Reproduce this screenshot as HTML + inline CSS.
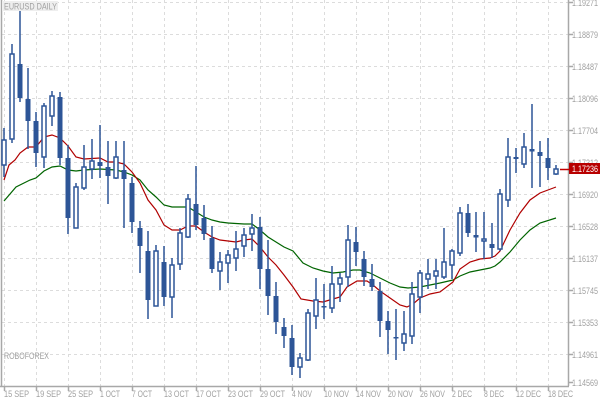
<!DOCTYPE html>
<html><head><meta charset="utf-8"><style>
html,body{margin:0;padding:0;background:#fff;}
svg{display:block;}
text{font-family:"Liberation Sans",sans-serif;font-size:9px;fill:#a0a0a0;}
</style></head><body>
<svg width="600" height="400" viewBox="0 0 600 400" xmlns="http://www.w3.org/2000/svg">
<rect width="600" height="400" fill="#fff"/>
<g stroke="#dcdcdc" stroke-width="1" stroke-dasharray="3,3">
<path d="M2 2.5H568M2 34.5H568M2 66.5H568M2 98.5H568M2 130.5H568M2 162.5H568M2 194.5H568M2 226.5H568M2 258.5H568M2 290.5H568M2 322.5H568M2 354.5H568"/>
<path d="M4.5 0V386M36.5 0V386M68.5 0V386M100.5 0V386M132.5 0V386M164.5 0V386M196.5 0V386M228.5 0V386M260.5 0V386M292.5 0V386M324.5 0V386M356.5 0V386M388.5 0V386M420.5 0V386M452.5 0V386M484.5 0V386M516.5 0V386M548.5 0V386"/>
</g>
<g stroke="#a8a8a8" stroke-width="1.5" fill="none">
<path d="M1.5 0V386M568.5 0V386M0 386.5H569"/>
<path d="M4.5 386V391M36.5 386V391M68.5 386V391M100.5 386V391M132.5 386V391M164.5 386V391M196.5 386V391M228.5 386V391M260.5 386V391M292.5 386V391M324.5 386V391M356.5 386V391M388.5 386V391M420.5 386V391M452.5 386V391M484.5 386V391M516.5 386V391M548.5 386V391"/>
<path d="M568 2.5H573M568 34.5H573M568 66.5H573M568 98.5H573M568 130.5H573M568 162.5H573M568 194.5H573M568 226.5H573M568 258.5H573M568 290.5H573M568 322.5H573M568 354.5H573M568 382.5H573"/>
</g>
<rect x="2" y="1" width="56" height="10" fill="#eee"/>
<text x="4" y="9.5" textLength="53" lengthAdjust="spacingAndGlyphs">EURUSD DAILY</text>
<text x="4" y="359" textLength="45" lengthAdjust="spacingAndGlyphs">ROBOFOREX</text>
<g>
<text x="572" y="6" textLength="26" lengthAdjust="spacingAndGlyphs">1.19271</text><text x="572" y="38" textLength="26" lengthAdjust="spacingAndGlyphs">1.18879</text><text x="572" y="70" textLength="26" lengthAdjust="spacingAndGlyphs">1.18487</text><text x="572" y="102" textLength="26" lengthAdjust="spacingAndGlyphs">1.18096</text><text x="572" y="134" textLength="26" lengthAdjust="spacingAndGlyphs">1.17704</text><text x="572" y="166" textLength="26" lengthAdjust="spacingAndGlyphs">1.17312</text><text x="572" y="198" textLength="26" lengthAdjust="spacingAndGlyphs">1.16920</text><text x="572" y="230" textLength="26" lengthAdjust="spacingAndGlyphs">1.16528</text><text x="572" y="262" textLength="26" lengthAdjust="spacingAndGlyphs">1.16137</text><text x="572" y="294" textLength="26" lengthAdjust="spacingAndGlyphs">1.15745</text><text x="572" y="326" textLength="26" lengthAdjust="spacingAndGlyphs">1.15353</text><text x="572" y="358" textLength="26" lengthAdjust="spacingAndGlyphs">1.14961</text><text x="572" y="386" textLength="26" lengthAdjust="spacingAndGlyphs">1.14569</text>
</g>
<g>
<text x="4" y="397" textLength="25" lengthAdjust="spacingAndGlyphs">15 SEP</text><text x="36" y="397" textLength="25" lengthAdjust="spacingAndGlyphs">19 SEP</text><text x="68" y="397" textLength="25" lengthAdjust="spacingAndGlyphs">25 SEP</text><text x="100" y="397" textLength="20" lengthAdjust="spacingAndGlyphs">1 OCT</text><text x="132" y="397" textLength="20" lengthAdjust="spacingAndGlyphs">7 OCT</text><text x="164" y="397" textLength="25" lengthAdjust="spacingAndGlyphs">13 OCT</text><text x="196" y="397" textLength="25" lengthAdjust="spacingAndGlyphs">17 OCT</text><text x="228" y="397" textLength="25" lengthAdjust="spacingAndGlyphs">23 OCT</text><text x="260" y="397" textLength="25" lengthAdjust="spacingAndGlyphs">29 OCT</text><text x="292" y="397" textLength="20" lengthAdjust="spacingAndGlyphs">4 NOV</text><text x="324" y="397" textLength="25" lengthAdjust="spacingAndGlyphs">10 NOV</text><text x="356" y="397" textLength="25" lengthAdjust="spacingAndGlyphs">14 NOV</text><text x="388" y="397" textLength="25" lengthAdjust="spacingAndGlyphs">20 NOV</text><text x="420" y="397" textLength="25" lengthAdjust="spacingAndGlyphs">26 NOV</text><text x="452" y="397" textLength="20" lengthAdjust="spacingAndGlyphs">2 DEC</text><text x="484" y="397" textLength="20" lengthAdjust="spacingAndGlyphs">8 DEC</text><text x="516" y="397" textLength="25" lengthAdjust="spacingAndGlyphs">12 DEC</text><text x="548" y="397" textLength="25" lengthAdjust="spacingAndGlyphs">18 DEC</text>
</g>
<polyline fill="none" stroke="#006400" stroke-width="1.2" points="4,201 16,187 30,180 36,178 44,171 52,167 60,166 68,170 76,171 84,170 100,169 116,170 124,172 132,175 140,180 148,190 156,197 164,205 172,207 188,207 196,212 204,217 212,220 220,222 228,223 244,224 252,224 260,230 268,237 276,242 284,247 293,251 303,263 313,268 323,271 333,273 343,272 353,270 360,270 370,273 380,278 390,283 400,287 408,288 420,287 440,283 453,280 460,276 470,272 480,270 490,268 495,266 500,262 510,252 520,240 530,230 540,223 556,218"/>
<polyline fill="none" stroke="#b00000" stroke-width="1.2" points="4,180 9,165 15,160 20,153 28,147 36,147 44,137 52,135 60,138 68,146 76,157 84,159 100,158 108,162 116,162 124,164 132,172 140,183 148,200 156,210 164,225 172,230 180,230 188,226 196,226 204,232 212,237 220,240 228,241 236,242 244,240 252,239 260,247 268,257 276,265 284,275 293,287 301,299 313,301 323,302 333,299 340,297 347,287 357,281 367,281 373,285 380,291 390,298 400,305 407,307 413,304 420,298 430,294 440,292 453,282 460,269 470,262 480,259 490,258 495,256 500,251 510,230 520,213 530,200 540,193 556,187"/>
<g stroke="#2d5597" stroke-width="1.5" fill="none">
<path d="M4 128V177M12 44V143M20 11V102M28 68V149M36 112V167M44 103V168M52 91V126M60 92V165M68 145V234M76 183V228M84 145V190M92 139V179M100 125V178M108 141V204M116 141V179M124 141V228M132 177V233M140 221V273M148 231V319M156 245V306M164 246V306M172 258V318M180 228V270M188 194V238M196 166V230M204 205V240M212 226V273M220 252V290M228 250V283M236 231V271M244 228V257M252 214V251M260 217V289M268 240V315M276 282V334M284 318V348M292 325V375M300 353V378M308 309V361M316 278V329M324 284V319M332 266V313M340 273V302M348 225V287M356 227V266M364 251V286M372 264V291M380 282V337M388 311V354M396 309V360M404 311V351M412 282V344M420 270V313M428 259V289M436 259V289M444 228V279M452 249V279M460 207V256M468 204V237M476 212V252M484 212V259M492 223V258M500 189V251M508 138V207M516 148V173M524 133V168M532 104V188M540 141V187M548 138V180M556 165V175"/>
</g>
<g fill="#2d5597">
<rect x="17.5" y="64" width="5" height="34"/><rect x="25.5" y="99" width="5" height="22"/><rect x="33.5" y="121" width="5" height="32"/><rect x="57.5" y="97" width="5" height="61"/><rect x="65.5" y="158" width="5" height="60"/><rect x="97.5" y="162" width="5" height="4"/><rect x="105.5" y="167" width="5" height="9"/><rect x="121.5" y="170" width="5" height="9"/><rect x="129.5" y="183" width="5" height="39"/><rect x="137.5" y="228" width="5" height="18"/><rect x="145.5" y="251" width="5" height="49"/><rect x="161.5" y="262" width="5" height="35"/><rect x="193.5" y="204" width="5" height="21"/><rect x="201.5" y="218" width="5" height="16"/><rect x="209.5" y="238" width="5" height="31"/><rect x="257.5" y="227" width="5" height="42"/><rect x="265.5" y="269" width="5" height="27"/><rect x="273.5" y="296" width="5" height="26"/><rect x="281.5" y="327" width="5" height="9"/><rect x="289.5" y="338" width="5" height="29"/><rect x="321.5" y="306" width="5" height="1.5"/><rect x="353.5" y="242" width="5" height="10"/><rect x="361.5" y="259" width="5" height="18"/><rect x="369.5" y="279" width="5" height="8"/><rect x="377.5" y="291" width="5" height="30"/><rect x="385.5" y="321" width="5" height="9"/><rect x="393.5" y="337" width="5" height="1.5"/><rect x="465.5" y="213" width="5" height="20"/><rect x="473.5" y="235" width="5" height="2.5"/><rect x="489.5" y="244" width="5" height="4"/><rect x="513.5" y="157" width="5" height="2"/><rect x="529.5" y="149" width="5" height="2.5"/><rect x="537.5" y="152" width="5" height="4"/><rect x="545.5" y="158" width="5" height="10"/>
</g>
<g fill="#fff" stroke="#2d5597" stroke-width="1.5">
<rect x="2" y="140" width="4" height="25"/><rect x="10" y="54" width="4" height="85"/><rect x="42" y="106" width="4" height="51"/><rect x="50" y="96" width="4" height="20"/><rect x="74" y="187" width="4" height="41"/><rect x="82" y="167" width="4" height="21"/><rect x="90" y="161" width="4" height="8"/><rect x="114" y="157" width="4" height="21"/><rect x="154" y="251" width="4" height="55"/><rect x="170" y="265" width="4" height="32"/><rect x="178" y="233" width="4" height="31"/><rect x="186" y="199" width="4" height="38"/><rect x="218" y="262" width="4" height="9"/><rect x="226" y="255" width="4" height="8"/><rect x="234" y="249" width="4" height="9"/><rect x="242" y="235" width="4" height="11"/><rect x="250" y="228" width="4" height="6"/><rect x="298" y="358" width="4" height="9"/><rect x="306" y="313" width="4" height="47"/><rect x="314" y="300" width="4" height="16"/><rect x="330" y="284" width="4" height="24"/><rect x="338" y="278" width="4" height="6"/><rect x="346" y="240" width="4" height="37"/><rect x="402" y="334" width="4" height="9"/><rect x="410" y="294" width="4" height="42"/><rect x="418" y="273" width="4" height="24"/><rect x="426" y="274" width="4" height="5"/><rect x="434" y="271" width="4" height="5"/><rect x="442" y="262" width="4" height="15"/><rect x="450" y="251" width="4" height="14"/><rect x="458" y="213" width="4" height="40"/><rect x="482" y="239" width="4" height="2"/><rect x="498" y="194" width="4" height="55"/><rect x="506" y="157" width="4" height="43"/><rect x="522" y="147" width="4" height="17"/><rect x="554" y="169" width="4" height="5"/>
</g>
<path d="M560 169.5H569" stroke="#c00000" stroke-width="1.5"/>
<rect x="569" y="163" width="31" height="11" fill="#b80000"/>
<text x="572" y="172" textLength="26" lengthAdjust="spacingAndGlyphs" style="fill:#fff">1.17236</text>
</svg>
</body></html>
